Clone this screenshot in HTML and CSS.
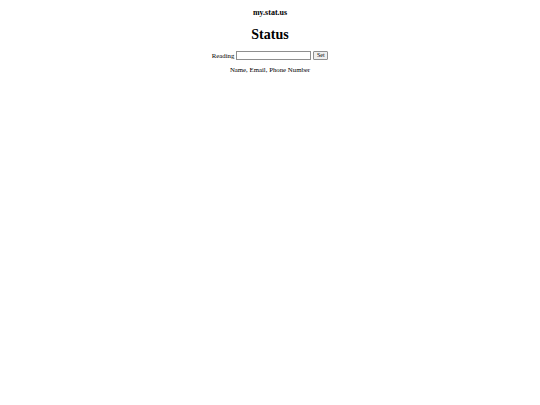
FILE: index.html
```html
<!DOCTYPE html>
<html>
<head>
<meta charset="utf-8">
<link rel="stylesheet" href="styles.css">
</head>
<body>
<div class="page">
  <div class="brand">my.stat.us</div>
  <h1 class="title">Status</h1>
  <form class="reading">
    <label class="label">Reading</label>
    <input class="field" type="text">
    <button class="btn" type="button">Set</button>
  </form>
  <p class="fields">Name, Email, Phone Number</p>
</div>
</body>
</html>
```
FILE: styles.css
```css
html, body {
  margin: 0;
  padding: 0;
  background: #fff;
}
body {
  font-family: "Liberation Serif", "Times New Roman", serif;
  color: #000;
}
.page {
  display: flex;
  flex-direction: column;
  align-items: center;
  padding-top: 8px;
}
.brand {
  font-weight: bold;
  font-size: 8px;
  line-height: 9px;
}
.title {
  font-size: 14px;
  line-height: 17px;
  margin: 9px 0 0 0;
}
.reading {
  display: flex;
  align-items: center;
  gap: 2px;
  margin-top: 8px;
  font-size: 6.8px;
}
.label {
  font-size: 6.8px;
}
.field {
  width: 75px;
  height: 9px;
  box-sizing: border-box;
  border: 1px solid #8f8f8f;
  padding: 0;
  margin: 0;
}
.btn {
  height: 9px;
  width: 15px;
  box-sizing: border-box;
  font-family: "Liberation Serif", serif;
  font-size: 6px;
  line-height: 7px;
  padding: 0;
  margin: 0;
  border: 1px solid #8f8f8f;
  background: #efefef;
  border-radius: 1px;
}
.fields {
  font-size: 6.8px;
  margin: 6px 0 0 0;
}
```
